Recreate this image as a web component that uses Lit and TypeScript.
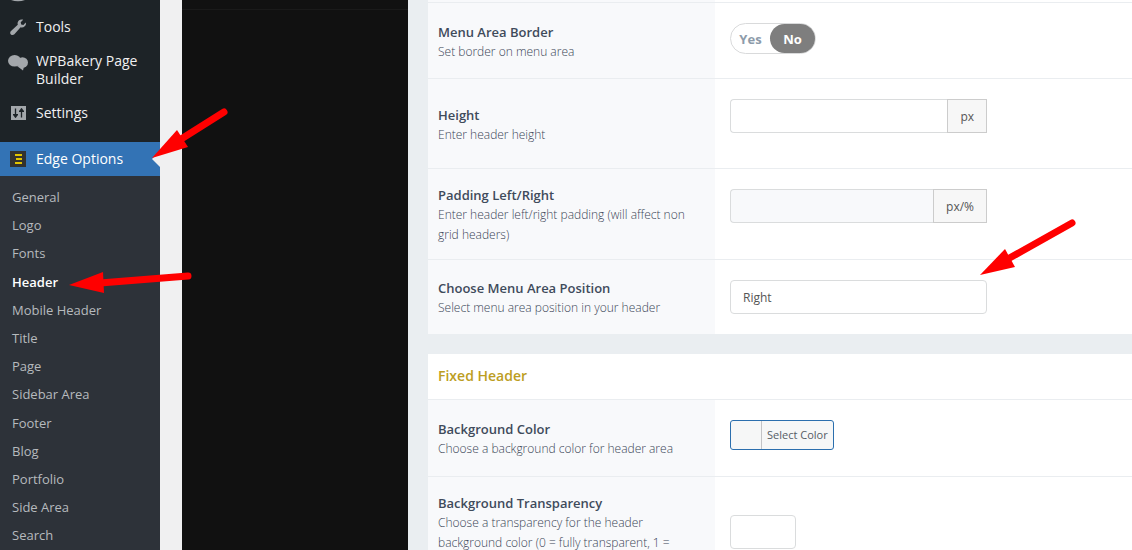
import { LitElement, html, css, svg } from "lit";
import { customElement, property } from "lit/decorators.js";
import { classMap } from "lit/directives/class-map.js";

@customElement("admin-sidebar")
class AdminSidebar extends LitElement {
  static styles = css`
    :host {
      display: block;
      background: #1d2327;
      color: #f0f0f1;
      font-size: 14px;
      line-height: 18px;
    }
    .previous {
      display: flex;
      align-items: flex-start;
      height: 10px;
      padding-left: 10px;
    }
    ul {
      list-style: none;
      margin: 0;
      padding: 0;
    }
    a {
      color: inherit;
      text-decoration: none;
    }
    .item {
      display: grid;
      grid-template-columns: 36px 1fr;
    }
    .item svg {
      margin: 7px 0 0 8px;
    }
    .item span {
      padding: 8px 16px 8px 0;
    }
    .separator {
      height: 12px;
    }
    .current {
      position: relative;
      background: #3373b5;
      color: #fff;
    }
    .current::after {
      content: "";
      position: absolute;
      right: 0;
      top: 9px;
      border: 8px solid transparent;
      border-right-color: #f0f0f1;
    }
    .submenu {
      background: #2d3239;
      padding: 7px 0;
      font-size: 13px;
      line-height: 1.4;
      color: #b6babe;
    }
    .submenu a {
      display: block;
      padding: 5px 12px;
    }
    .submenu .selected {
      color: #fff;
      font-weight: 600;
    }
  `;

  private icons = {
    tools: svg`<path fill="#a3a7ab" d="M16.7 9.3c-1.1 1.1-2.7 1.5-4.1 1l-6.2 6.9c-.9 1-2.5 1.1-3.5.2s-.9-2.6.1-3.5l6.8-6.2c-.5-1.4-.1-3 1-4.100 1.200-1.200 2.900-1.500 4.400-.9l-2.500 2.500.5 2.200 2.200.5 2.300-2.400c.6 1.300.2 2.700-1 3.800z"/>`,
    bakery: svg`<g fill="#a3a7ab"><ellipse cx="6.600" cy="9.800" rx="6.600" ry="5.800"/><ellipse cx="14.500" cy="11.500" rx="5.500" ry="5.300"/><path d="M9 15l6 4.500 1-4z"/></g>`,
    settings: svg`<path fill="#a3a7ab" d="M3 3h15v14H3z"/><path fill="none" stroke="#1d2327" stroke-width="1.300" d="M7.500 5.500v9M13.500 5.500v9"/><path fill="#1d2327" d="M5 11h5v1l-2.500 3L5 12zM11 9h5V8l-2.500-3L11 8z"/>`,
    edge: svg`<path fill="#32322f" d="M2 2h16v16H2z"/><path fill="#e0c400" d="M7 5h7v2H7zM8 9h6v2H8zM7 13h7v2H7z"/>`,
  };

  private entries = ["General", "Logo", "Fonts", "Header", "Mobile Header", "Title", "Page",
    "Sidebar Area", "Footer", "Blog", "Portfolio", "Side Area", "Search"];

  private item(icon: keyof AdminSidebar["icons"], label: string, current = false) {
    return html`<a href="#" class=${classMap({ item: true, current })}>
      <svg width="20" height="20" viewBox="0 0 20 20" aria-hidden="true">${this.icons[icon]}</svg>
      <span>${label}</span>
    </a>`;
  }

  render() {
    return html`<nav>
      <div class="previous">
        <svg width="16" height="2" viewBox="0 0 16 2" aria-hidden="true"><path fill="#a3a7ab" d="M1 0h14q-7 2.500-14 0z"/></svg>
      </div>
      <ul>
        <li>${this.item("tools", "Tools")}</li>
        <li>${this.item("bakery", "WPBakery Page Builder")}</li>
        <li>${this.item("settings", "Settings")}</li>
        <li class="separator"></li>
        <li>
          ${this.item("edge", "Edge Options", true)}
          <ul class="submenu">
            ${this.entries.map((e) => html`<li><a href="#" class=${classMap({ selected: e === "Header" })}>${e}</a></li>`)}
          </ul>
        </li>
      </ul>
    </nav>`;
  }
}

@customElement("option-row")
class OptionRow extends LitElement {
  @property() heading = "";
  @property() description = "";

  static styles = css`
    :host {
      display: grid;
      grid-template-columns: 287px 1fr;
      background: #fff;
      border-bottom: 1px solid #eaedf0;
    }
    .about {
      display: flex;
      flex-direction: column;
      justify-content: center;
      padding: 16px 20px 14px 10px;
      background: #f8f9fb;
      line-height: 20px;
    }
    h4 {
      margin: 0;
      font-size: 13px;
      font-weight: 600;
      color: #3f4b5b;
    }
    p {
      margin: 0;
      font-size: 12px;
      color: #3a4556;
      font-weight: 300;
    }
    .control {
      padding: 20px 15px;
    }
    :host([tall]) .control {
      padding-bottom: 35px;
    }
    :host([middle]) .control {
      display: flex;
      align-items: center;
    }
  `;

  render() {
    return html`
      <div class="about">
        <h4>${this.heading}</h4>
        <p>${this.description}</p>
      </div>
      <div class="control"><slot></slot></div>
    `;
  }
}

@customElement("app-root")
class AppRoot extends LitElement {
  static styles = css`
    * {
      box-sizing: border-box;
    }
    :host {
      display: grid;
      grid-template-columns: 160px 248px 1fr;
      position: relative;
      height: 100vh;
      overflow: hidden;
      background: #f0f0f1;
      font-family: "Open Sans", "Noto Sans", sans-serif;
    }
    .tabs {
      margin-left: 22px;
      background: #111;
      padding-top: 9px;
    }
    .tabs hr {
      margin: 0;
      border: 0;
      border-top: 1px solid #1a1a1a;
    }
    main {
      padding-left: 20px;
      background: #eaeef1;
      min-width: 0;
    }
    .edge {
      height: 3px;
      background: linear-gradient(90deg, #f8f9fb 287px, #fff 287px);
      border-bottom: 1px solid #eaedf0;
    }
    .panel {
      margin-bottom: 20px;
    }
    .panel > :last-child {
      border-bottom: 0;
    }
    h3 {
      margin: 0;
      padding: 12px 10px 13px;
      background: #fff;
      border-bottom: 1px solid #eaedf0;
      color: #bc9d22;
      font-size: 14px;
      line-height: 20px;
      font-weight: 600;
    }
    .toggle {
      display: inline-flex;
      height: 31px;
      margin: 0 0 4px;
      padding: 0;
      border: 1px solid #d9dadb;
      border-radius: 16px;
      vertical-align: top;
      font-size: 13px;
      font-weight: 700;
      line-height: 30px;
      color: #8d9baa;
    }
    .toggle label {
      width: 39px;
      text-align: center;
      border-radius: 15px;
    }
    .toggle input {
      position: absolute;
      opacity: 0;
    }
    .toggle label:has(:checked) {
      width: 45px;
      background: #7e7e7e;
      color: #fff;
    }
    .group {
      display: flex;
      width: 257px;
      height: 34px;
    }
    input,
    select {
      font: inherit;
    }
    .field {
      flex: 1;
      min-width: 0;
      border: 1px solid #dadcdd;
      border-radius: 4px;
      background: #fff;
    }
    .group input.field {
      border-right: 0;
      border-radius: 4px 0 0 4px;
    }
    .group input.soft {
      background: #f8f9fb;
    }
    .unit {
      padding: 0 12px;
      border: 1px solid #ccc;
      background: #f7f7f7;
      color: #555;
      font-size: 12px;
      line-height: 34px;
    }
    select.field {
      appearance: none;
      padding: 0 12px;
      font-size: 12px;
      color: #555;
    }
    .field.small {
      flex: none;
      width: 66px;
      height: 34px;
    }
    .picker {
      display: flex;
      height: 30px;
      margin-bottom: 6px;
      padding: 0;
      border: 1px solid #2b6fae;
      border-radius: 3px;
      background: #f6f7f7;
      color: #555d66;
      font: inherit;
      font-size: 11px;
      line-height: 28px;
    }
    .swatch {
      width: 31px;
      height: 28px;
      border-right: 1px solid #c3c4c7;
    }
    .caption {
      padding: 0 5px;
    }
    .arrows {
      position: absolute;
      left: 0;
      top: 0;
      pointer-events: none;
    }
  `;

  private arrows = [
    { tail: "224 112", neck: "178 141", head: "152,158 177,130 188,147" },
    { tail: "188 276", neck: "100 283", head: "69,285 103,272 104,293" },
    { tail: "1072 223", neck: "1006 260", head: "980,275 1005,249 1015,267" },
  ];

  render() {
    return html`
      <admin-sidebar></admin-sidebar>
      <aside class="tabs"><hr /></aside>
      <main>
        <section class="panel">
          <div class="edge"></div>
          <option-row heading="Menu Area Border" description="Set border on menu area">
            <fieldset class="toggle" aria-label="Menu Area Border">
              <label><input type="radio" name="border" value="yes" />Yes</label>
              <label><input type="radio" name="border" value="no" checked />No</label>
            </fieldset>
          </option-row>
          <option-row tall heading="Height" description="Enter header height">
            <div class="group">
              <input class="field" type="text" aria-label="Height" /><span class="unit">px</span>
            </div>
          </option-row>
          <option-row tall heading="Padding Left/Right" description="Enter header left/right padding (will affect non grid headers)">
            <div class="group">
              <input class="field soft" type="text" aria-label="Padding Left/Right" /><span class="unit">px/%</span>
            </div>
          </option-row>
          <option-row heading="Choose Menu Area Position" description="Select menu area position in your header">
            <div class="group">
              <select class="field" aria-label="Choose Menu Area Position"><option>Right</option></select>
            </div>
          </option-row>
        </section>
        <section class="panel">
          <h3>Fixed Header</h3>
          <option-row heading="Background Color" description="Choose a background color for header area">
            <button class="picker" type="button"><span class="swatch"></span><span class="caption">Select Color</span></button>
          </option-row>
          <option-row middle heading="Background Transparency" description="Choose a transparency for the header background color (0 = fully transparent, 1 = opaque)">
            <input class="field small" type="text" aria-label="Background Transparency" />
          </option-row>
        </section>
      </main>
      <svg class="arrows" width="1132" height="550" viewBox="0 0 1132 550" aria-hidden="true">
        ${this.arrows.map((a) => svg`<path d="M${a.tail}L${a.neck}" stroke="#f00" stroke-width="7" stroke-linecap="round"/><polygon points=${a.head} fill="#f00"/>`)}
      </svg>
    `;
  }
}
